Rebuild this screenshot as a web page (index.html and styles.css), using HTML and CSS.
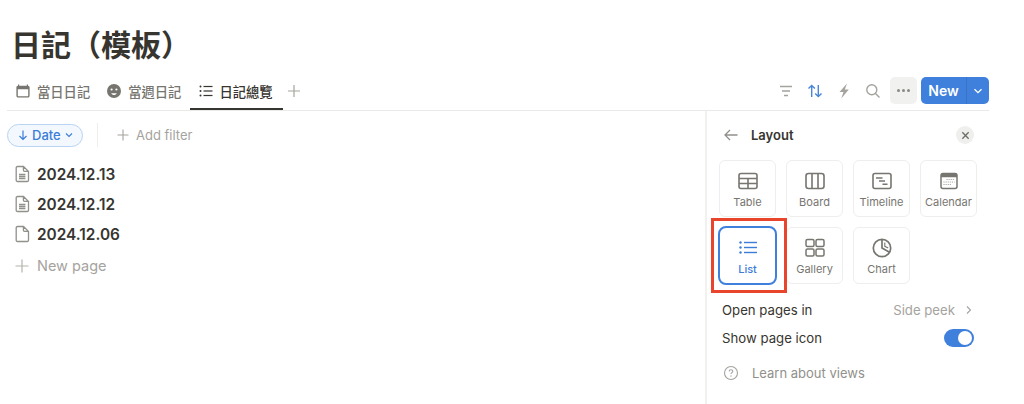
FILE: index.html
```html
<!DOCTYPE html>
<html>
<head>
    <meta charset="utf-8">
    <link rel="stylesheet" href="styles.css">
</head>
<body>
    <div class="page">
        <h1 class="title">日記（模板）</h1>

        <div class="tabbar">
            <div class="tabs">
                <div class="tab">
                    <svg class="ico16" viewBox="0 0 16 16"><path d="M3 1.500h1.200v1.200h7.600V1.500H13v1.200c1 .1 1.600.8 1.600 1.800v8.200c0 1-.7 1.800-1.800 1.800H3.200c-1.100 0-1.800-.8-1.800-1.800V4.500c0-1 .6-1.700 1.600-1.800zM2.800 6.200v6.500c0 .4.200.6.600.6h9.200c.4 0 .6-.2.600-.6V6.200z" fill="#77756f" fill-rule="evenodd"/></svg>
                    <span>當日日記</span>
                </div>
                <div class="tab">
                    <svg class="ico16" viewBox="0 0 16 16"><circle cx="8" cy="8" r="7" fill="#77756f"/><circle cx="5.600" cy="6.500" r="1.100" fill="#fff"/><circle cx="10.400" cy="6.500" r="1.100" fill="#fff"/><path d="M5.200 10.200h5.600c-.5 1.200-1.500 1.800-2.800 1.800s-2.300-.6-2.800-1.800z" fill="#fff"/></svg>
                    <span>當週日記</span>
                </div>
                <div class="tab tab-on">
                    <svg class="ico16" viewBox="0 0 16 16"><g fill="#37352f"><circle cx="2.500" cy="3.500" r="1"/><circle cx="2.500" cy="8" r="1"/><circle cx="2.500" cy="12.500" r="1"/><rect x="5.500" y="2.900" width="9" height="1.200"/><rect x="5.500" y="7.400" width="9" height="1.200"/><rect x="5.500" y="11.900" width="9" height="1.200"/></g></svg>
                    <span>日記總覽</span>
                </div>
                <svg class="tab-add" viewBox="0 0 14 14"><path d="M7 1v12M1 7h12" stroke="#a5a39e" stroke-width="1.200" fill="none"/></svg>
            </div>

            <div class="tools">
                <svg class="ico16" viewBox="0 0 16 16"><path d="M2 3.500h12M4 8h8M6 12.500h4" stroke="#a5a39e" stroke-width="1.400" fill="none"/></svg>
                <svg class="ico16" viewBox="0 0 16 16"><path d="M4.700 14V2.500M1.500 5.600l3.200-3.200 3.200 3.200M11.300 2v11.500M8.200 10.400l3.100 3.200 3.200-3.200" stroke="#4a86d8" stroke-width="1.400" fill="none"/></svg>
                <svg class="ico16" viewBox="0 0 16 16"><path d="M11 .5 3.500 9h4l-2.200 6.500L12.800 6.600H8.800z" fill="#a5a39e"/></svg>
                <svg class="ico16" viewBox="0 0 16 16"><circle cx="6.800" cy="6.800" r="5" stroke="#a5a39e" stroke-width="1.400" fill="none"/><path d="m10.500 10.500 4 4" stroke="#a5a39e" stroke-width="1.500"/></svg>
                <div class="more"><i></i><i></i><i></i></div>
                <div class="newbtn">
                    <span class="newlabel">New</span>
                    <span class="newdrop"><svg viewBox="0 0 10 10"><path d="m1.500 3.200 3.500 3.500 3.500-3.500" stroke="#fff" stroke-width="1.300" fill="none"/></svg></span>
                </div>
            </div>
        </div>

        <div class="main">
            <div class="content">
                <div class="filters">
                    <div class="datepill">
                        <svg viewBox="0 0 12 12"><path d="M6 1.500v9M2.500 7 6 10.500 9.500 7" stroke="#3b7dd8" stroke-width="1.200" fill="none"/></svg>
                        <span>Date</span>
                        <svg viewBox="0 0 10 10"><path d="m2 3.500 3 3 3-3" stroke="#3b7dd8" stroke-width="1.100" fill="none"/></svg>
                    </div>
                    <div class="sep"></div>
                    <div class="addfilter">
                        <svg viewBox="0 0 14 14"><path d="M7 1.500v11M1.500 7h11" stroke="#a5a39e" stroke-width="1.100" fill="none"/></svg>
                        <span>Add filter</span>
                    </div>
                </div>

                <div class="rows">
                    <div class="row">
                        <svg class="ico18" viewBox="0 0 18 18"><path d="M4.500 1.500h6L15.500 6.500v8.700c0 .8-.6 1.300-1.300 1.300H4.500c-.8 0-1.300-.5-1.300-1.300V2.800c0-.8.500-1.300 1.300-1.300zM10.400 1.700v3.600c0 .7.400 1.100 1.100 1.100h3.800M6 9.500h6.400M6 11.500h6.400M6 13.500h6.400" stroke="#91908b" stroke-width="1.300" fill="none"/></svg>
                        <span>2024.12.13</span>
                    </div>
                    <div class="row">
                        <svg class="ico18" viewBox="0 0 18 18"><path d="M4.500 1.500h6L15.500 6.500v8.700c0 .8-.6 1.300-1.300 1.300H4.500c-.8 0-1.300-.5-1.300-1.300V2.800c0-.8.500-1.300 1.300-1.300zM10.400 1.700v3.600c0 .7.400 1.100 1.100 1.100h3.800M6 9.500h6.400M6 11.500h6.400M6 13.500h6.400" stroke="#91908b" stroke-width="1.300" fill="none"/></svg>
                        <span>2024.12.12</span>
                    </div>
                    <div class="row">
                        <svg class="ico18" viewBox="0 0 18 18"><path d="M4.500 1.500h6L15.500 6.500v8.700c0 .8-.6 1.300-1.300 1.300H4.500c-.8 0-1.300-.5-1.300-1.300V2.800c0-.8.500-1.300 1.300-1.300zM10.400 1.700v3.600c0 .7.400 1.100 1.100 1.100h3.800" stroke="#91908b" stroke-width="1.300" fill="none"/></svg>
                        <span>2024.12.06</span>
                    </div>
                    <div class="row row-new">
                        <svg class="ico18" viewBox="0 0 18 18"><path d="M9 2.500v13M2.500 9h13" stroke="#b5b3ae" stroke-width="1.200" fill="none"/></svg>
                        <span>New page</span>
                    </div>
                </div>
            </div>

            <div class="panel">
                <div class="panel-head">
                    <svg class="back" viewBox="0 0 16 16"><path d="M14.500 8H2M7 3 2 8l5 5" stroke="#91908b" stroke-width="1.300" fill="none"/></svg>
                    <span class="panel-title">Layout</span>
                    <div class="closebtn"><svg viewBox="0 0 10 10"><path d="m1.500 1.500 7 7M8.500 1.500l-7 7" stroke="#6f6e69" stroke-width="1.500" fill="none"/></svg></div>
                </div>

                <div class="cards">
                    <div class="card">
                        <svg viewBox="0 0 20 20"><g fill="none" stroke="#77756f" stroke-width="1.600"><rect x="1" y="2.500" width="18" height="15" rx="2"/><path d="M1 7.500h18M1 12.500h18M10 7.500v10"/></g></svg>
                        <span>Table</span>
                    </div>
                    <div class="card">
                        <svg viewBox="0 0 20 20"><g fill="none" stroke="#77756f" stroke-width="1.600"><rect x="1" y="2.500" width="18" height="15" rx="2.500"/><path d="M7 2.500v15M13 2.500v15"/></g></svg>
                        <span>Board</span>
                    </div>
                    <div class="card">
                        <svg viewBox="0 0 20 20"><g fill="none" stroke="#77756f" stroke-width="1.600"><rect x="1" y="2.500" width="18" height="15" rx="2"/><path d="M4 7h6.500M7 10h6M10.500 13.200h5"/></g></svg>
                        <span>Timeline</span>
                    </div>
                    <div class="card">
                        <svg viewBox="0 0 20 20"><rect x="2" y="2.500" width="16" height="15" rx="2" fill="none" stroke="#77756f" stroke-width="1.500"/><path d="M2 4c0-1 .6-1.500 1.500-1.500h13c.9 0 1.500.5 1.500 1.500v2.200H2z" fill="#77756f"/><path d="M7.500 8.500h8M4.500 11h11M4.500 13.500h8" stroke="#a5a39e" stroke-width="1.100" stroke-dasharray="1.100 1"/></svg>
                        <span>Calendar</span>
                    </div>
                    <div class="card card-on">
                        <svg viewBox="0 0 20 20"><g fill="#3b7dd8"><circle cx="2.500" cy="4.500" r="1.200"/><circle cx="2.500" cy="9.500" r="1.200"/><circle cx="2.500" cy="14.500" r="1.200"/><rect x="6" y="3.800" width="13" height="1.400"/><rect x="6" y="8.800" width="13" height="1.400"/><rect x="6" y="13.800" width="13" height="1.400"/></g></svg>
                        <span>List</span>
                    </div>
                    <div class="card">
                        <svg viewBox="0 0 20 20"><g fill="none" stroke="#77756f" stroke-width="1.500"><rect x="1" y="1.500" width="8" height="7" rx="1.500"/><rect x="11" y="1.500" width="8" height="7" rx="1.500"/><rect x="1" y="11" width="8" height="7" rx="1.500"/><rect x="11" y="11" width="8" height="7" rx="1.500"/></g></svg>
                        <span>Gallery</span>
                    </div>
                    <div class="card">
                        <svg viewBox="0 0 20 20"><g fill="none" stroke="#77756f" stroke-width="1.700"><circle cx="10" cy="10" r="8.700"/><path d="M10 1.300V10l7.500 4.300"/><path d="M12.800 4.500v3.800l3.400 1.800" stroke-width="1.100"/></g></svg>
                        <span>Chart</span>
                    </div>
                </div>

                <div class="opt">
                    <span>Open pages in</span>
                    <div class="opt-val">
                        <span>Side peek</span>
                        <svg viewBox="0 0 10 10"><path d="m3 1.500 3.500 3.500L3 8.500" stroke="#a5a39e" stroke-width="1.100" fill="none"/></svg>
                    </div>
                </div>
                <div class="opt">
                    <span>Show page icon</span>
                    <div class="toggle"><i></i></div>
                </div>
                <div class="learn">
                    <svg viewBox="0 0 16 16"><circle cx="8" cy="8" r="6.500" stroke="#a5a39e" stroke-width="1.100" fill="none"/><path d="M6.200 6.400c0-1 .8-1.600 1.800-1.600s1.800.6 1.800 1.500c0 1.300-1.800 1.300-1.800 2.600" stroke="#a5a39e" stroke-width="1.100" fill="none"/><circle cx="8" cy="11" r=".7" fill="#a5a39e"/></svg>
                    <span>Learn about views</span>
                </div>
            </div>
        </div>

        <div class="redbox"></div>
    </div>
</body>
</html>
```

FILE: styles.css
```css
html, body {
    margin: 0;
    background-color: #fff;
}
.page {
    position: relative;
    width: 1024px;
    height: 404px;
    overflow: hidden;
    font-family: Inter, "Noto Sans CJK TC", sans-serif;
    color: #37352f;
}
svg {
    display: block;
    flex-shrink: 0;
}
.ico16 {
    width: 16px;
    height: 16px;
}
.ico18 {
    width: 18px;
    height: 18px;
}

.title {
    box-sizing: border-box;
    margin: 0;
    padding: 24px 0 0 11px;
    height: 77px;
    font-size: 30px;
    line-height: 42px;
    font-weight: 700;
}

.tabbar {
    display: flex;
    justify-content: space-between;
    height: 33px;
    margin: 0 35px 0 7px;
    border-bottom: 1px solid #e9e9e7;
}
.tabs {
    display: flex;
    align-items: flex-start;
}
.tab {
    display: flex;
    align-items: center;
    gap: 6px;
    height: 28px;
    padding: 0 8px;
    font-size: 13.300px;
    font-weight: 500;
    color: #77756f;
}
.tab-on {
    gap: 5px;
    box-sizing: border-box;
    height: 33px;
    margin-left: 1px;
    padding: 0 10px 5px 8px;
    color: #37352f;
    box-shadow: inset 0 -2px 0 #37352f;
}
.tab-add {
    width: 14px;
    height: 14px;
    margin: 7px 0 0 4px;
}

.tools {
    display: flex;
    align-items: center;
    gap: 13px;
    height: 27px;
}
.more {
    display: flex;
    align-items: center;
    justify-content: center;
    gap: 2px;
    width: 27px;
    height: 27px;
    margin-left: -4px;
    margin-right: -9px;
    border-radius: 5px;
    background-color: #f1f1ef;
}
.more i {
    width: 3px;
    height: 3px;
    border-radius: 50%;
    background-color: #8a8984;
}
.newbtn {
    display: flex;
    height: 27px;
    border-radius: 5px;
    background-color: #3f80dc;
    color: #fff;
}
.newlabel {
    width: 45px;
    font-size: 14px;
    line-height: 27px;
    font-weight: 600;
    text-align: center;
    border-right: 1px solid #3a72c4;
}
.newdrop {
    display: flex;
    align-items: center;
    justify-content: center;
    width: 22px;
}
.newdrop svg {
    width: 10px;
    height: 10px;
}

.main {
    display: flex;
    height: 293px;
}
.content {
    width: 698px;
    padding-left: 7px;
}
.filters {
    display: flex;
    align-items: center;
    height: 24px;
    margin-top: 12px;
}
.datepill {
    display: flex;
    align-items: center;
    gap: 3px;
    box-sizing: border-box;
    width: 76px;
    height: 23px;
    padding-left: 9px;
    border: 1px solid #b9d3f3;
    border-radius: 12px;
    background-color: #f3f8fe;
    color: #3b7dd8;
    font-size: 13px;
    font-weight: 500;
}
.datepill svg:first-child {
    width: 12px;
    height: 12px;
}
.datepill svg:last-child {
    width: 10px;
    height: 10px;
}
.sep {
    width: 1px;
    height: 24px;
    margin: 0 18px 0 14px;
    background-color: #eeeeec;
}
.addfilter {
    display: flex;
    align-items: center;
    gap: 6px;
    font-size: 13px;
    color: #a5a39e;
}
.addfilter svg {
    width: 14px;
    height: 14px;
}

.rows {
    margin-top: 12px;
}
.row {
    display: flex;
    align-items: center;
    gap: 6px;
    height: 30px;
    padding-left: 6px;
    font-size: 15.400px;
    font-weight: 600;
}
.row-new {
    height: 33px;
    font-size: 14.500px;
    font-weight: 400;
    color: #a5a39e;
}

.panel {
    box-sizing: border-box;
    width: 288px;
    height: 293px;
    padding-left: 12px;
    border-left: 2px solid #f1f1ef;
}
.panel-head {
    display: flex;
    align-items: center;
    width: 255px;
    height: 24px;
    margin-top: 12px;
}
.back {
    width: 16px;
    height: 16px;
    margin-left: 4px;
}
.panel-title {
    margin-left: 12px;
    flex: 1;
    font-size: 13px;
    font-weight: 600;
}
.closebtn {
    display: flex;
    align-items: center;
    justify-content: center;
    width: 18px;
    height: 18px;
    border-radius: 50%;
    background-color: #efefed;
}
.closebtn svg {
    width: 9px;
    height: 9px;
}

.cards {
    display: grid;
    grid-template-columns: repeat(4, 57px);
    grid-auto-rows: 57px;
    gap: 10px;
    margin-top: 13px;
    margin-bottom: 12px;
}
.card {
    display: flex;
    flex-direction: column;
    align-items: center;
    box-sizing: border-box;
    padding-top: 10px;
    border: 1px solid #eeeeec;
    border-radius: 6px;
    font-size: 11px;
    line-height: 14px;
    color: #77756f;
}
.card svg {
    width: 20px;
    height: 20px;
    margin-bottom: 4px;
}
.card-on {
    margin: -1px;
    border: 2px solid #3f80dc;
    border-radius: 8px;
    color: #3b7dd8;
    font-weight: 500;
}

.opt {
    display: flex;
    align-items: center;
    justify-content: space-between;
    width: 252px;
    height: 28px;
    margin-left: 3px;
    font-size: 13.200px;
}
.opt-val {
    display: flex;
    align-items: center;
    gap: 9px;
    color: #a5a39e;
}
.opt-val svg {
    width: 10px;
    height: 10px;
}
.toggle {
    display: flex;
    align-items: center;
    justify-content: flex-end;
    box-sizing: border-box;
    width: 30px;
    height: 18px;
    padding-right: 2px;
    border-radius: 9px;
    background-color: #3f80dc;
}
.toggle i {
    width: 14px;
    height: 14px;
    border-radius: 50%;
    background-color: #fff;
}
.learn {
    display: flex;
    align-items: center;
    gap: 13px;
    height: 24px;
    margin-top: 9px;
    padding-left: 4px;
    font-size: 13px;
    color: #91908b;
}
.learn svg {
    width: 16px;
    height: 16px;
}

.redbox {
    position: absolute;
    left: 711px;
    top: 218px;
    width: 70px;
    height: 69px;
    border: 3px solid #e8452c;
}
```
